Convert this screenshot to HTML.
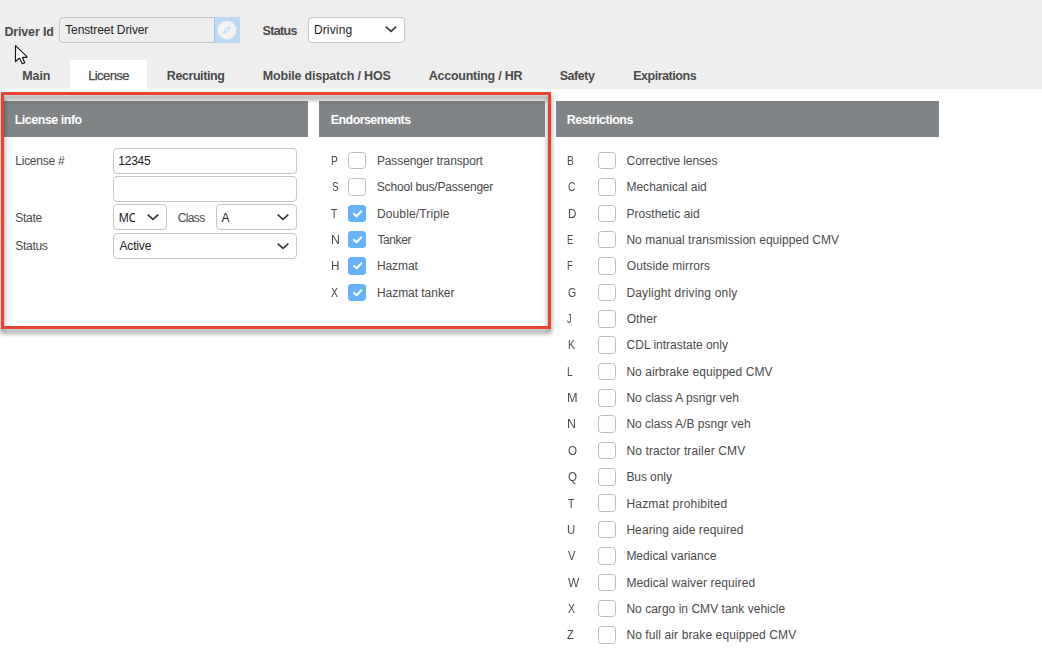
<!DOCTYPE html>
<html><head><meta charset="utf-8"><title>Driver - License</title>
<style>
html,body{margin:0;padding:0;}
body{width:1042px;height:669px;overflow:hidden;background:#fff;font-family:"Liberation Sans",sans-serif;position:relative;}
.a{position:absolute;}
.t{position:absolute;white-space:nowrap;line-height:20px;height:20px;}
.bar{left:0;top:0;width:1042px;height:89px;background:#eeeeee;}
.tab{background:#fff;}
.hd{background:#808486;height:36px;top:101px;}
.in{box-sizing:border-box;border:1px solid #c6c6c6;border-radius:4px;background:#fff;height:26px;}
.cb{box-sizing:border-box;border:1px solid #bcbcbc;border-radius:3.5px;background:#fff;width:18px;height:17.5px;}
.cb.on{border-color:#64b3fc;background:#64b3fc;border-radius:3px;}
svg{position:absolute;overflow:visible;}
</style></head><body>
<div class="a bar"></div>
<div class="a tab" style="left:70px;top:60px;width:77px;height:29px"></div>
<!-- driver id -->
<div class="a in" style="left:59px;top:17px;width:156px;background:#eeeeee;border-radius:4px 0 0 4px;"></div>
<div class="a" style="left:214px;top:17px;width:26px;height:26px;background:#bcdaf5;box-shadow:inset 1px 0 0 #a9c9ea;"></div>
<svg style="left:214px;top:17px" width="26" height="26" viewBox="0 0 26 26"><circle cx="13" cy="13" r="9.3" fill="#f3f3f3"/><path d="M17.1 8.9 L14.4 14.4 L8.9 17.1 L11.6 11.6 Z" fill="#c8e0f6" stroke="#c8e0f6" stroke-width="0.8" stroke-linejoin="round"/><circle cx="13" cy="13" r="1.1" fill="#f3f3f3"/></svg>
<div class="a in" style="left:308px;top:17px;width:97px;"></div>
<!-- cursor -->
<svg style="left:14px;top:44px" width="14" height="22" viewBox="0 0 14 22"><path d="M1.5 1.7 L1.5 17.6 L5.5 14 L8.4 19.7 L10.7 18.7 L8.4 13.3 L12.9 13.3 L12.9 12.6 Z" fill="#fff" stroke="#14141e" stroke-width="1.15" stroke-linejoin="round"/></svg>
<!-- panel headers -->
<div class="a hd" style="left:4px;width:304px"></div>
<div class="a hd" style="left:319px;width:226px"></div>
<div class="a hd" style="left:556px;width:383px"></div>
<!-- license inputs -->
<div class="a in" style="left:113px;top:148px;width:184px"></div>
<div class="a in" style="left:113px;top:176px;width:184px"></div>
<div class="a in" style="left:113px;top:204px;width:54px"></div>
<div class="a in" style="left:216px;top:204px;width:81px"></div>
<div class="a in" style="left:113px;top:233px;width:184px"></div>
<svg style="left:385px;top:26.3px" width="12" height="7" viewBox="0 0 12 7"><path d="M0.7 0.6 L6 5.3 L11.3 0.6" fill="none" stroke="#3a3a3a" stroke-width="1.8"/></svg>
<svg style="left:147px;top:214.4px" width="12" height="7" viewBox="0 0 12 7"><path d="M0.7 0.6 L6 5.3 L11.3 0.6" fill="none" stroke="#3a3a3a" stroke-width="1.8"/></svg>
<svg style="left:277px;top:214.4px" width="12" height="7" viewBox="0 0 12 7"><path d="M0.7 0.6 L6 5.3 L11.3 0.6" fill="none" stroke="#3a3a3a" stroke-width="1.8"/></svg>
<svg style="left:277px;top:242.5px" width="12" height="7" viewBox="0 0 12 7"><path d="M0.7 0.6 L6 5.3 L11.3 0.6" fill="none" stroke="#3a3a3a" stroke-width="1.8"/></svg>

<div class="a cb" style="left:348px;top:151.9px"></div>
<div class="a cb" style="left:348px;top:178.25px"></div>
<div class="a cb on" style="left:348px;top:204.6px"></div>
<svg style="left:348px;top:204.6px" width="18" height="18" viewBox="0 0 18 18"><path d="M6 8.9 L8.6 11.3 L13.4 6.3" fill="none" stroke="#fff" stroke-width="2" stroke-linecap="round" stroke-linejoin="round"/></svg>
<div class="a cb on" style="left:348px;top:230.95px"></div>
<svg style="left:348px;top:230.95px" width="18" height="18" viewBox="0 0 18 18"><path d="M6 8.9 L8.6 11.3 L13.4 6.3" fill="none" stroke="#fff" stroke-width="2" stroke-linecap="round" stroke-linejoin="round"/></svg>
<div class="a cb on" style="left:348px;top:257.3px"></div>
<svg style="left:348px;top:257.3px" width="18" height="18" viewBox="0 0 18 18"><path d="M6 8.9 L8.6 11.3 L13.4 6.3" fill="none" stroke="#fff" stroke-width="2" stroke-linecap="round" stroke-linejoin="round"/></svg>
<div class="a cb on" style="left:348px;top:283.65px"></div>
<svg style="left:348px;top:283.65px" width="18" height="18" viewBox="0 0 18 18"><path d="M6 8.9 L8.6 11.3 L13.4 6.3" fill="none" stroke="#fff" stroke-width="2" stroke-linecap="round" stroke-linejoin="round"/></svg>
<div class="a cb" style="left:598px;top:151.9px"></div>
<div class="a cb" style="left:598px;top:178.25px"></div>
<div class="a cb" style="left:598px;top:204.6px"></div>
<div class="a cb" style="left:598px;top:230.95px"></div>
<div class="a cb" style="left:598px;top:257.3px"></div>
<div class="a cb" style="left:598px;top:283.65px"></div>
<div class="a cb" style="left:598px;top:310px"></div>
<div class="a cb" style="left:598px;top:336.35px"></div>
<div class="a cb" style="left:598px;top:362.7px"></div>
<div class="a cb" style="left:598px;top:389.05px"></div>
<div class="a cb" style="left:598px;top:415.4px"></div>
<div class="a cb" style="left:598px;top:441.75px"></div>
<div class="a cb" style="left:598px;top:468.1px"></div>
<div class="a cb" style="left:598px;top:494.45px"></div>
<div class="a cb" style="left:598px;top:520.8px"></div>
<div class="a cb" style="left:598px;top:547.15px"></div>
<div class="a cb" style="left:598px;top:573.5px"></div>
<div class="a cb" style="left:598px;top:599.85px"></div>
<div class="a cb" style="left:598px;top:626.2px"></div>
<span class="t" id="t0" style="left:4.46px;top:22px;font-size:12.48px;color:#4a4a4a;font-weight:bold;letter-spacing:-0.15px;">Driver Id</span>
<span class="t" id="t1" style="left:65.17px;top:20px;font-size:12px;color:#222;letter-spacing:-0.099px;">Tenstreet Driver</span>
<span class="t" id="t2" style="left:262.6px;top:21px;font-size:12.48px;color:#4a4a4a;font-weight:bold;letter-spacing:-0.672px;">Status</span>
<span class="t" id="t3" style="left:313.91px;top:20px;font-size:12px;color:#222;letter-spacing:0.15px;">Driving</span>
<span class="t" id="t4" style="left:22.26px;top:66px;font-size:12.48px;color:#4a4a4a;font-weight:bold;letter-spacing:-0.076px;">Main</span>
<span class="t" id="t5" style="left:88.17px;top:65.5px;font-size:13px;color:#4a4a4a;-webkit-text-stroke:0.25px #444;letter-spacing:-0.593px;">License</span>
<span class="t" id="t6" style="left:166.79px;top:66px;font-size:12.48px;color:#4a4a4a;font-weight:bold;letter-spacing:-0.403px;">Recruiting</span>
<span class="t" id="t7" style="left:262.85px;top:66px;font-size:12.48px;color:#4a4a4a;font-weight:bold;letter-spacing:-0.188px;">Mobile dispatch / HOS</span>
<span class="t" id="t8" style="left:428.81px;top:66px;font-size:12.48px;color:#4a4a4a;font-weight:bold;letter-spacing:-0.238px;">Accounting / HR</span>
<span class="t" id="t9" style="left:559.65px;top:66px;font-size:12.48px;color:#4a4a4a;font-weight:bold;letter-spacing:-0.417px;">Safety</span>
<span class="t" id="t10" style="left:633.15px;top:66px;font-size:12.48px;color:#4a4a4a;font-weight:bold;letter-spacing:-0.441px;">Expirations</span>
<span class="t" id="t11" style="left:14.73px;top:110px;font-size:12.48px;color:#fff;font-weight:bold;letter-spacing:-0.478px;">License info</span>
<span class="t" id="t12" style="left:330.85px;top:110px;font-size:12.48px;color:#fff;font-weight:bold;letter-spacing:-0.581px;">Endorsements</span>
<span class="t" id="t13" style="left:566.73px;top:110px;font-size:12.48px;color:#fff;font-weight:bold;letter-spacing:-0.49px;">Restrictions</span>
<span class="t" id="t14" style="left:15.31px;top:151px;font-size:12px;color:#4a4a4a;letter-spacing:-0.255px;">License #</span>
<span class="t" id="t15" style="left:118.17px;top:151px;font-size:12px;color:#222;letter-spacing:-0.187px;">12345</span>
<span class="t" id="t16" style="left:15.36px;top:208px;font-size:12px;color:#4a4a4a;letter-spacing:-0.324px;">State</span>
<span class="t" id="t17" style="left:118.79px;top:208px;font-size:12px;color:#222;width:16.21px;overflow:hidden;">MC</span>
<span class="t" id="t18" style="left:177.75px;top:208px;font-size:12px;color:#4a4a4a;letter-spacing:-0.636px;">Class</span>
<span class="t" id="t19" style="left:221.54px;top:208px;font-size:12px;color:#222;">A</span>
<span class="t" id="t20" style="left:15.36px;top:236px;font-size:12px;color:#4a4a4a;letter-spacing:-0.305px;">Status</span>
<span class="t" id="t21" style="left:119.56px;top:236px;font-size:12px;color:#222;letter-spacing:-0.184px;">Active</span>
<span class="t" id="t22" style="left:331.28px;top:151px;font-size:12px;color:#4a4a4a;transform:scaleX(0.84);transform-origin:0 0;">P</span>
<span class="t" id="t23" style="left:376.91px;top:151px;font-size:12px;color:#4a4a4a;letter-spacing:-0.112px;">Passenger transport</span>
<span class="t" id="t24" style="left:331.63px;top:177px;font-size:12px;color:#4a4a4a;transform:scaleX(0.82);transform-origin:0 0;">S</span>
<span class="t" id="t25" style="left:376.8px;top:177px;font-size:12px;color:#4a4a4a;letter-spacing:-0.185px;">School bus/Passenger</span>
<span class="t" id="t26" style="left:331.31px;top:204px;font-size:12px;color:#4a4a4a;transform:scaleX(0.86);transform-origin:0 0;">T</span>
<span class="t" id="t27" style="left:376.91px;top:204px;font-size:12px;color:#4a4a4a;letter-spacing:0.14px;">Double/Triple</span>
<span class="t" id="t28" style="left:330.92px;top:230px;font-size:12px;color:#4a4a4a;transform:scaleX(1.03);transform-origin:0 0;">N</span>
<span class="t" id="t29" style="left:377.46px;top:230px;font-size:12px;color:#4a4a4a;letter-spacing:-0.409px;">Tanker</span>
<span class="t" id="t30" style="left:331.03px;top:256px;font-size:12px;color:#4a4a4a;transform:scaleX(0.98);transform-origin:0 0;">H</span>
<span class="t" id="t31" style="left:376.91px;top:256px;font-size:12px;color:#4a4a4a;letter-spacing:-0.08px;">Hazmat</span>
<span class="t" id="t32" style="left:331.21px;top:283px;font-size:12px;color:#4a4a4a;transform:scaleX(0.88);transform-origin:0 0;">X</span>
<span class="t" id="t33" style="left:376.91px;top:283px;font-size:12px;color:#4a4a4a;letter-spacing:-0.037px;">Hazmat tanker</span>
<span class="t" id="t34" style="left:566.78px;top:151px;font-size:12px;color:#4a4a4a;transform:scaleX(0.86);transform-origin:0 0;">B</span>
<span class="t" id="t35" style="left:626.6px;top:151px;font-size:12px;color:#4a4a4a;letter-spacing:-0.117px;">Corrective lenses</span>
<span class="t" id="t36" style="left:567.68px;top:177px;font-size:12px;color:#4a4a4a;transform:scaleX(0.86);transform-origin:0 0;">C</span>
<span class="t" id="t37" style="left:626.39px;top:177px;font-size:12px;color:#4a4a4a;letter-spacing:0.029px;">Mechanical aid</span>
<span class="t" id="t38" style="left:567.53px;top:204px;font-size:12px;color:#4a4a4a;transform:scaleX(0.97);transform-origin:0 0;">D</span>
<span class="t" id="t39" style="left:626.39px;top:204px;font-size:12px;color:#4a4a4a;letter-spacing:0.051px;">Prosthetic aid</span>
<span class="t" id="t40" style="left:566.86px;top:230px;font-size:12px;color:#4a4a4a;transform:scaleX(0.78);transform-origin:0 0;">E</span>
<span class="t" id="t41" style="left:626.39px;top:230px;font-size:12px;color:#4a4a4a;letter-spacing:0.033px;">No manual transmission equipped CMV</span>
<span class="t" id="t42" style="left:566.81px;top:256px;font-size:12px;color:#4a4a4a;transform:scaleX(0.8);transform-origin:0 0;">F</span>
<span class="t" id="t43" style="left:626.71px;top:256px;font-size:12px;color:#4a4a4a;letter-spacing:0.099px;">Outside mirrors</span>
<span class="t" id="t44" style="left:567.6px;top:283px;font-size:12px;color:#4a4a4a;transform:scaleX(0.88);transform-origin:0 0;">G</span>
<span class="t" id="t45" style="left:626.39px;top:283px;font-size:12px;color:#4a4a4a;letter-spacing:0.173px;">Daylight driving only</span>
<span class="t" id="t46" style="left:567.35px;top:309px;font-size:12px;color:#4a4a4a;transform:scaleX(0.75);transform-origin:0 0;">J</span>
<span class="t" id="t47" style="left:626.71px;top:309px;font-size:12px;color:#4a4a4a;letter-spacing:0.075px;">Other</span>
<span class="t" id="t48" style="left:567.58px;top:335px;font-size:12px;color:#4a4a4a;transform:scaleX(0.87);transform-origin:0 0;">K</span>
<span class="t" id="t49" style="left:626.6px;top:335px;font-size:12px;color:#4a4a4a;letter-spacing:-0.017px;">CDL intrastate only</span>
<span class="t" id="t50" style="left:566.78px;top:362px;font-size:12px;color:#4a4a4a;transform:scaleX(0.85);transform-origin:0 0;">L</span>
<span class="t" id="t51" style="left:626.39px;top:362px;font-size:12px;color:#4a4a4a;letter-spacing:0.061px;">No airbrake equipped CMV</span>
<span class="t" id="t52" style="left:567.37px;top:388px;font-size:12px;color:#4a4a4a;transform:scaleX(1.06);transform-origin:0 0;">M</span>
<span class="t" id="t53" style="left:626.39px;top:388px;font-size:12px;color:#4a4a4a;letter-spacing:0.028px;">No class A psngr veh</span>
<span class="t" id="t54" style="left:567.42px;top:414px;font-size:12px;color:#4a4a4a;transform:scaleX(1.03);transform-origin:0 0;">N</span>
<span class="t" id="t55" style="left:626.39px;top:414px;font-size:12px;color:#4a4a4a;letter-spacing:0.006px;">No class A/B psngr veh</span>
<span class="t" id="t56" style="left:567.6px;top:441px;font-size:12px;color:#4a4a4a;transform:scaleX(0.97);transform-origin:0 0;">O</span>
<span class="t" id="t57" style="left:626.39px;top:441px;font-size:12px;color:#4a4a4a;letter-spacing:0.135px;">No tractor trailer CMV</span>
<span class="t" id="t58" style="left:567.6px;top:467px;font-size:12px;color:#4a4a4a;transform:scaleX(0.97);transform-origin:0 0;">Q</span>
<span class="t" id="t59" style="left:626.39px;top:467px;font-size:12px;color:#4a4a4a;letter-spacing:-0.07px;">Bus only</span>
<span class="t" id="t60" style="left:567.81px;top:494px;font-size:12px;color:#4a4a4a;transform:scaleX(0.86);transform-origin:0 0;">T</span>
<span class="t" id="t61" style="left:626.39px;top:494px;font-size:12px;color:#4a4a4a;letter-spacing:0.213px;">Hazmat prohibited</span>
<span class="t" id="t62" style="left:567.2px;top:520px;font-size:12px;color:#4a4a4a;transform:scaleX(0.95);transform-origin:0 0;">U</span>
<span class="t" id="t63" style="left:626.39px;top:520px;font-size:12px;color:#4a4a4a;letter-spacing:0.082px;">Hearing aide required</span>
<span class="t" id="t64" style="left:567.7px;top:546px;font-size:12px;color:#4a4a4a;transform:scaleX(0.93);transform-origin:0 0;">V</span>
<span class="t" id="t65" style="left:626.39px;top:546px;font-size:12px;color:#4a4a4a;letter-spacing:-0.002px;">Medical variance</span>
<span class="t" id="t66" style="left:567.87px;top:573px;font-size:12px;color:#4a4a4a;transform:scaleX(0.99);transform-origin:0 0;">W</span>
<span class="t" id="t67" style="left:626.39px;top:573px;font-size:12px;color:#4a4a4a;letter-spacing:0.091px;">Medical waiver required</span>
<span class="t" id="t68" style="left:567.71px;top:599px;font-size:12px;color:#4a4a4a;transform:scaleX(0.88);transform-origin:0 0;">X</span>
<span class="t" id="t69" style="left:626.39px;top:599px;font-size:12px;color:#4a4a4a;letter-spacing:0.028px;">No cargo in CMV tank vehicle</span>
<span class="t" id="t70" style="left:567.37px;top:625px;font-size:12px;color:#4a4a4a;transform:scaleX(0.93);transform-origin:0 0;">Z</span>
<span class="t" id="t71" style="left:626.39px;top:625px;font-size:12px;color:#4a4a4a;letter-spacing:0.104px;">No full air brake equipped CMV</span>
<div class="a" style="left:1px;top:92px;width:550px;height:237px;box-sizing:border-box;border:3px solid #e8432f;filter:drop-shadow(0px 4px 2.6px rgba(0,0,0,0.54));"></div>
</body></html>
